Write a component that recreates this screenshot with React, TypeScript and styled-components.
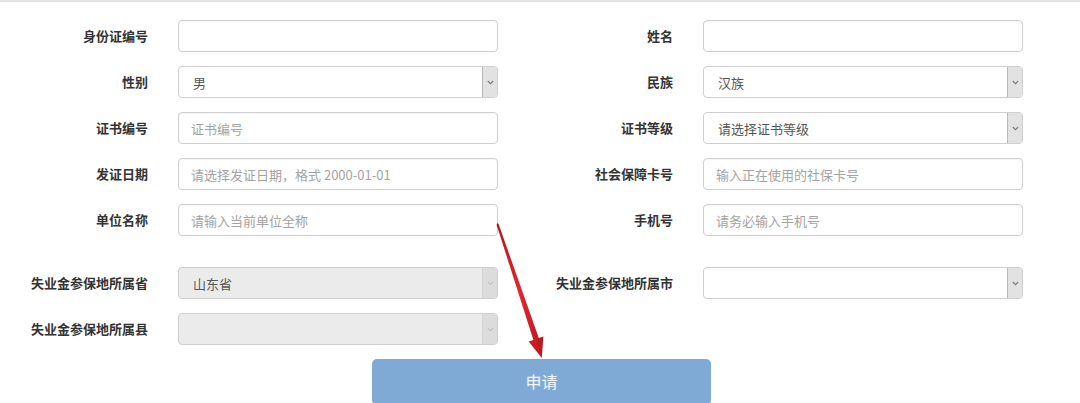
import React from "react";
import styled, { createGlobalStyle } from "styled-components";

const GlobalStyle = createGlobalStyle`
  html, body {
    margin: 0;
    padding: 0;
    background: #ffffff;
  }
  body {
    font-family: "Noto Sans CJK SC", "Liberation Sans", sans-serif;
    font-size: 13px;
    color: #333;
  }
  * { box-sizing: border-box; }
`;

const Page = styled.div`
  position: relative;
  width: 1080px;
  height: 403px;
  overflow: hidden;
  border-top: 2px solid #e4e4e4;
  background: #fff;
`;

const Form = styled.div`
  display: flex;
  flex-direction: column;
  gap: 14px;
  padding-top: 18px;
`;

const Row = styled.div<{ $spaced?: boolean }>`
  display: grid;
  grid-template-columns: 525px 525px;
  margin-top: ${(p) => (p.$spaced ? "17px" : "0")};
`;

const Field = styled.div`
  display: flex;
  align-items: center;
  gap: 30px;
`;

const Label = styled.label`
  width: 148px;
  text-align: right;
  font-weight: bold;
  font-size: 13px;
  line-height: 16px;
  color: #333;
  white-space: nowrap;
`;

const TextInput = styled.input`
  width: 320px;
  height: 32px;
  padding: 0 12px;
  border: 1px solid #cfcfcf;
  border-radius: 4px;
  background: #fff;
  font-family: "Noto Sans CJK SC", "Liberation Sans", sans-serif;
  font-size: 13px;
  color: #555;
  outline: none;
  box-shadow: inset 0 1px 1px rgba(0, 0, 0, 0.04);
  &::placeholder {
    color: #a3a3a3;
  }
`;

const SelectBox = styled.div<{ $disabled?: boolean }>`
  width: 320px;
  height: 32px;
  display: flex;
  align-items: stretch;
  border: 1px solid #cfcfcf;
  border-radius: 4px;
  overflow: hidden;
  background: ${(p) => (p.$disabled ? "#ebebeb" : "#fff")};
`;

const SelectValue = styled.span`
  flex: 1;
  display: flex;
  align-items: center;
  padding-left: 14px;
  font-size: 13px;
  color: #555;
`;

const ArrowBox = styled.span<{ $disabled?: boolean }>`
  width: 15px;
  display: flex;
  align-items: center;
  justify-content: center;
  border-left: 1px solid ${(p) => (p.$disabled ? "#d2d2d2" : "#b9b9b9")};
  background: ${(p) => (p.$disabled ? "#dcdcdc" : "#e2e2e2")};
  color: ${(p) => (p.$disabled ? "#c4c4c4" : "#7a7a7a")};
`;

const ButtonRow = styled.div`
  display: flex;
  justify-content: center;
  padding-left: 3px;
`;

const SubmitButton = styled.button`
  width: 339px;
  height: 46px;
  border: none;
  border-radius: 5px;
  background: #80aad6;
  color: #f2f6fb;
  font-family: "Noto Sans CJK SC", "Liberation Sans", sans-serif;
  font-size: 16px;
  padding-bottom: 4px;
  cursor: pointer;
`;

const ArrowOverlay = styled.svg`
  position: absolute;
  left: 0;
  top: 0;
  width: 1080px;
  height: 403px;
  pointer-events: none;
`;

const Chevron: React.FC = () => (
  <svg width="7" height="5" viewBox="0 0 7 5">
    <path d="M0.8 1 L3.5 3.7 L6.2 1" fill="none" stroke="currentColor" strokeWidth="1.1" />
  </svg>
);

const Select: React.FC<{ value?: string; disabled?: boolean }> = ({ value, disabled }) => (
  <SelectBox $disabled={disabled}>
    <SelectValue>{value}</SelectValue>
    <ArrowBox $disabled={disabled}>
      <Chevron />
    </ArrowBox>
  </SelectBox>
);

export default function App() {
  return (
    <>
      <GlobalStyle />
      <Page>
        <Form>
          <Row>
            <Field>
              <Label>身份证编号</Label>
              <TextInput readOnly />
            </Field>
            <Field>
              <Label>姓名</Label>
              <TextInput readOnly />
            </Field>
          </Row>
          <Row>
            <Field>
              <Label>性别</Label>
              <Select value="男" />
            </Field>
            <Field>
              <Label>民族</Label>
              <Select value="汉族" />
            </Field>
          </Row>
          <Row>
            <Field>
              <Label>证书编号</Label>
              <TextInput readOnly placeholder="证书编号" />
            </Field>
            <Field>
              <Label>证书等级</Label>
              <Select value="请选择证书等级" />
            </Field>
          </Row>
          <Row>
            <Field>
              <Label>发证日期</Label>
              <TextInput readOnly placeholder="请选择发证日期，格式 2000-01-01" />
            </Field>
            <Field>
              <Label>社会保障卡号</Label>
              <TextInput readOnly placeholder="输入正在使用的社保卡号" />
            </Field>
          </Row>
          <Row>
            <Field>
              <Label>单位名称</Label>
              <TextInput readOnly placeholder="请输入当前单位全称" />
            </Field>
            <Field>
              <Label>手机号</Label>
              <TextInput readOnly placeholder="请务必输入手机号" />
            </Field>
          </Row>
          <Row $spaced>
            <Field>
              <Label>失业金参保地所属省</Label>
              <Select value="山东省" disabled />
            </Field>
            <Field>
              <Label>失业金参保地所属市</Label>
              <Select />
            </Field>
          </Row>
          <Row>
            <Field>
              <Label>失业金参保地所属县</Label>
              <Select disabled />
            </Field>
          </Row>
          <ButtonRow>
            <SubmitButton type="button">申请</SubmitButton>
          </ButtonRow>
        </Form>
        <ArrowOverlay viewBox="0 0 1080 403">
          <defs>
            <linearGradient id="redArrow" x1="0" y1="0" x2="1" y2="0">
              <stop offset="0" stopColor="#b5161c" />
              <stop offset="0.5" stopColor="#e3262d" />
              <stop offset="1" stopColor="#b8171d" />
            </linearGradient>
          </defs>
          <polygon
            points="497.4,221 498.6,222 538.8,336 543.4,334.4 541.8,356 528.6,339.6 533.4,338 496.6,222.8"
            fill="url(#redArrow)"
          />
        </ArrowOverlay>
      </Page>
    </>
  );
}
